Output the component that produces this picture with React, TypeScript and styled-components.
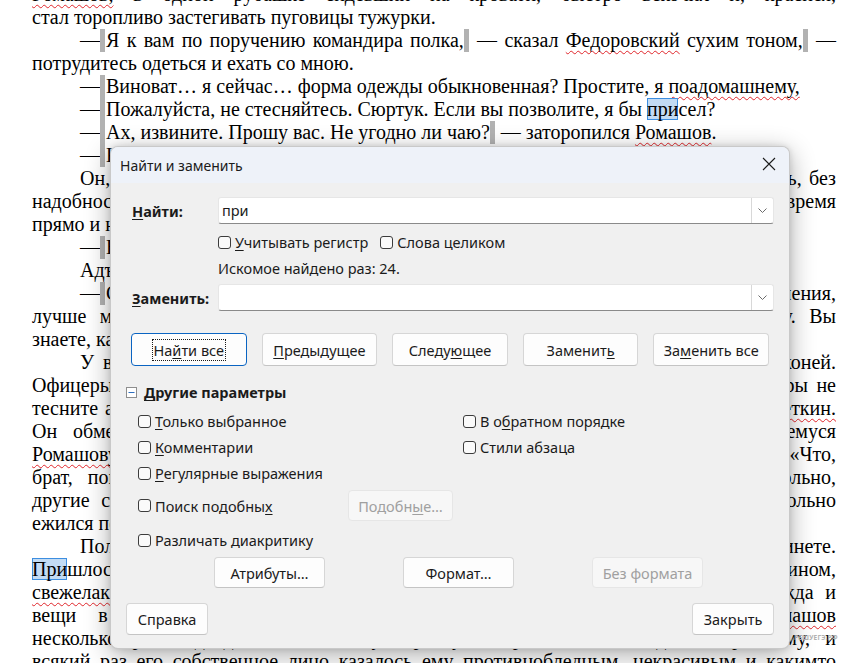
import styled, { createGlobalStyle } from "styled-components";

const GlobalStyle = createGlobalStyle`
  html,
  body {
    margin: 0;
    padding: 0;
    background: #ffffff;
    overflow: hidden;
  }
`;

export default function App() {
  return (
    <>
      <GlobalStyle />
      <Page>
        <Doc>
          <Line>
            <Spell>Ромашов,</Spell> в одной рубашке сидевший на кровати, быстро вскочил и, краснея,
          </Line>
          <Line $end>стал торопливо застегивать пуговицы тужурки.</Line>
          <Line $indent>
            —<Bar />Я к вам по поручению командира полка,<Bar /> — сказал <Spell>Федоровский</Spell> сухим тоном,<Bar /> —
          </Line>
          <Line $end>потрудитесь одеться и ехать со мною.</Line>
          <Line $indent $end>
            —<Bar />Виноват… я сейчас… форма одежды обыкновенная? Простите, я <Spell>поадомашнему,</Spell>
          </Line>
          <Line $indent $end>
            —<Bar />Пожалуйста, не стесняйтесь. Сюртук. Если вы позволите, я бы <Hit>при</Hit>сел?
          </Line>
          <Line $indent $end>
            —<Bar />Ах, извините. Прошу вас. Не угодно ли чаю?<Bar /> — заторопился <Spell>Ромашов</Spell>.
          </Line>
          <Line $indent $end>
            —<Bar />К сожалению, некогда. Благодарю вас.
          </Line>
          <Line $indent>
            Он, не снимая шинели, сел на стул и стал поправлять портупею, смахивать пыль, без
          </Line>
          <Line>
            надобности, вертел в руках перчатки. Ромашов торопливо одевался и все это время
          </Line>
          <Line $end>прямо и напряженно глядел на адъютанта.</Line>
          <Line $indent $end>
            —<Bar />Вы готовы? Так поедемте.
          </Line>
          <Line $indent $end>Адъютант молча встал и пошел к двери.</Line>
          <Line $indent>
            —<Bar />Скажите, зачем меня требуют? Это суд или меня берут только до выяснения,
          </Line>
          <Line>
            лучше молчать. Я и сам ничего не знаю, — ответил адъютант, — по приказу. Вы
          </Line>
          <Line $end>знаете, какое это тяжелое дело.</Line>
          <Line $indent>
            У ворот стояли извозчичьи дрожки, запряженные парой тощих разномастных коней.
          </Line>
          <Line>
            Офицеры сели рядом, и Федоровский вежливо подвинулся, стараясь, чтобы его шпоры не
          </Line>
          <Line>
            тесните адъютанта. Ехали молча. На углу площади им вдруг встретился поручик <Spell>Бобеткин.</Spell>
          </Line>
          <Line>
            Он обменялся с Федоровским быстрым взглядом и низко поклонился смеющемуся
          </Line>
          <Line>
            <Spell>Ромашову</Spell> и крикнул ему вслед на ходу. Ромашов разобрал только одно: «Что,
          </Line>
          <Line>
            брат, повезли тебя?» Прохожие с любопытством оглядывались, и это было больно,
          </Line>
          <Line>
            другие с любопытством смотрели им вслед из окон, и Ромашов всю дорогу невольно
          </Line>
          <Line $end>ежился под их взглядами.</Line>
          <Line $indent>
            Полковник Шульгович встретил их не в канцелярии, а у себя дома, в кабинете.
          </Line>
          <Line>
            <Hit>При</Hit>шлось долго ждать в большой холодной гостиной, пропахшей воском и керосином,
          </Line>
          <Line>
            <Spell>свежелакированной</Spell> мебелью. Все в ней было чинно и строго, как парадная одежда и
          </Line>
          <Line>
            вещи в полковом цейхгаузе перед большим инспекторским смотром. <Spell>Ромашов</Spell>
          </Line>
          <Line>
            несколько раз подходил к большому зеркалу в простенке и глядел попрежнему, и
          </Line>
          <Line>
            всякий раз его собственное лицо казалось ему противнобледным, некрасивым и какимто
          </Line>
        </Doc>
        <Watermark>РЕШУЕГЭ.РФ</Watermark>
        <FindReplaceDialog />
      </Page>
    </>
  );
}

function FindReplaceDialog() {
  return (
    <Dialog>
      <TitleBar>
        <Title>Найти и заменить</Title>
        <Close aria-label="Закрыть">
          <svg width="14" height="14" viewBox="0 0 14 14">
            <path d="M1 1L13 13M13 1L1 13" stroke="#1c1c1c" strokeWidth="1.1" />
          </svg>
        </Close>
      </TitleBar>
      <Body>
        <FieldRow>
          <FieldLabel>
            <U>Н</U>айти:
          </FieldLabel>
          <Combo>
            <ComboText>при</ComboText>
            <ComboArrow>
              <Chevron />
            </ComboArrow>
          </Combo>
        </FieldRow>
        <SubRow>
          <CheckItem>
            <Box />
            <span>
              <U>У</U>читывать регистр
            </span>
          </CheckItem>
          <CheckItem>
            <Box />
            <span>Слова целиком</span>
          </CheckItem>
        </SubRow>
        <Status>Искомое найдено раз: 24.</Status>
        <FieldRow $top={3}>
          <FieldLabel>
            <U>З</U>аменить:
          </FieldLabel>
          <Combo>
            <ComboText />
            <ComboArrow>
              <Chevron />
            </ComboArrow>
          </Combo>
        </FieldRow>
        <ActionRow>
          <Button $w={116} $focused>
            <FocusRing>
              На<U>й</U>ти все
            </FocusRing>
          </Button>
          <Button $w={116}>
            <U>П</U>редыдущее
          </Button>
          <Button $w={116}>
            Следу<U>ю</U>щее
          </Button>
          <Button $w={116}>
            Заменит<U>ь</U>
          </Button>
          <Button $w={116}>
            За<U>м</U>енить все
          </Button>
        </ActionRow>
        <SectionHeader>
          <svg width="11" height="11" viewBox="0 0 11 11">
            <rect x="0.5" y="0.5" width="10" height="10" fill="#ffffff" stroke="#8e8e8e" />
            <path d="M2.5 5.5H8.5" stroke="#2f6fbf" strokeWidth="1" />
          </svg>
          <span>
            <U>Д</U>ругие параметры
          </span>
        </SectionHeader>
        <Options>
          <OptRow>
            <CheckItem>
              <Box />
              <span>
                <U>Т</U>олько выбранное
              </span>
            </CheckItem>
            <CheckItem>
              <Box />
              <span>
                В о<U>б</U>ратном порядке
              </span>
            </CheckItem>
          </OptRow>
          <OptRow>
            <CheckItem>
              <Box />
              <span>
                <U>К</U>омментарии
              </span>
            </CheckItem>
            <CheckItem>
              <Box />
              <span>Стили абзаца</span>
            </CheckItem>
          </OptRow>
          <OptRow>
            <CheckItem>
              <Box />
              <span>
                <U>Р</U>егулярные выражения
              </span>
            </CheckItem>
          </OptRow>
          <OptRow $tall>
            <CheckItem $w={210}>
              <Box />
              <span>
                Поиск подобны<U>х</U>
              </span>
            </CheckItem>
            <Button $w={105} disabled>
              Подобн<U>ы</U>е…
            </Button>
          </OptRow>
          <OptRow>
            <CheckItem>
              <Box />
              <span>Различать диакритику</span>
            </CheckItem>
          </OptRow>
        </Options>
        <AttrRow>
          <Button $w={111}>Атрибуты…</Button>
          <Button $w={111}>Формат…</Button>
          <Button $w={111} disabled>
            Без формата
          </Button>
        </AttrRow>
        <Footer>
          <Button $w={82}>Справка</Button>
          <Button $w={82}>Закрыть</Button>
        </Footer>
      </Body>
    </Dialog>
  );
}

function Chevron() {
  return (
    <svg width="9" height="5" viewBox="0 0 9 5">
      <path d="M0.5 0.5L4.5 4.5L8.5 0.5" fill="none" stroke="#6b6b6b" strokeWidth="1" />
    </svg>
  );
}

const Page = styled.div`
  position: relative;
  width: 849px;
  height: 663px;
  overflow: hidden;
  background: #ffffff;
`;

const Doc = styled.div`
  margin-top: -17px;
  padding: 0 13px 0 32px;
  font-family: "Liberation Serif", "Times New Roman", serif;
  font-size: 20px;
  line-height: 23px;
  color: #000000;
`;

const Line = styled.p<{ $indent?: boolean; $end?: boolean }>`
  margin: 0;
  height: 23px;
  text-indent: ${(p) => (p.$indent ? "48px" : "0")};
  text-align: justify;
  text-align-last: ${(p) => (p.$end ? "left" : "justify")};
`;

const Bar = styled.span`
  display: inline-block;
  width: 5px;
  height: 23px;
  margin: 0 1px 0 0;
  vertical-align: top;
  background: #b2b2b2;
`;

const Spell = styled.span`
  text-decoration: underline wavy #e0262b;
  text-decoration-thickness: 1px;
  text-underline-offset: 3px;
  text-decoration-skip-ink: none;
`;

const Hit = styled.span`
  background: #c2dbf4;
  box-shadow: inset 0 0 0 1px #3d8ee0;
`;

const Watermark = styled.div`
  position: absolute;
  left: 794px;
  top: 633px;
  font-family: "Noto Sans", sans-serif;
  font-size: 6.5px;
  font-weight: 700;
  letter-spacing: 0.2px;
  color: #b2b2b2;
`;

const Dialog = styled.div`
  position: absolute;
  left: 110px;
  top: 146px;
  width: 680px;
  box-sizing: border-box;
  border: 1px solid rgba(0, 0, 0, 0.16);
  border-radius: 8px;
  overflow: hidden;
  background: #f0f0f0;
  box-shadow: 0 6px 26px rgba(0, 0, 0, 0.32), 0 0 6px rgba(0, 0, 0, 0.12);
  font-family: "Noto Sans", sans-serif;
  font-size: 14.5px;
  color: #1b1b1b;
`;

const TitleBar = styled.div`
  display: flex;
  align-items: center;
  justify-content: space-between;
  height: 36px;
  padding: 0 13px 0 9px;
  background: #eef2f9;
`;

const Title = styled.span`
  font-size: 14px;
`;

const Close = styled.span`
  display: flex;
  align-items: center;
  margin-top: -3px;
`;

const Body = styled.div`
  display: flex;
  flex-direction: column;
  padding: 14px 15px 13px;
`;

const FieldRow = styled.div<{ $top?: number }>`
  display: grid;
  grid-template-columns: 92px 1fr;
  align-items: center;
  height: 27px;
  margin-top: ${(p) => p.$top ?? 0}px;
`;

const FieldLabel = styled.span`
  padding-left: 6px;
  font-weight: 700;
`;

const Combo = styled.div`
  display: flex;
  height: 27px;
  box-sizing: border-box;
  background: #ffffff;
  border: 1px solid #e6e6e6;
  border-bottom-color: #8a8a8a;
  border-radius: 3px;
`;

const ComboText = styled.span`
  flex: 1;
  padding-left: 3px;
  line-height: 25px;
`;

const ComboArrow = styled.span`
  display: flex;
  align-items: center;
  justify-content: center;
  width: 21px;
  border-left: 1px solid #d8d8d8;
`;

const SubRow = styled.div`
  display: flex;
  gap: 12px;
  height: 26px;
  margin-top: 5px;
  padding-left: 92px;
`;

const Status = styled.div`
  height: 26px;
  padding-left: 92px;
  line-height: 26px;
`;

const CheckItem = styled.label<{ $w?: number }>`
  display: flex;
  align-items: center;
  gap: 4px;
  height: 26px;
  width: ${(p) => (p.$w ? `${p.$w}px` : "auto")};
  white-space: nowrap;
`;

const Box = styled.span`
  flex: none;
  width: 13px;
  height: 13px;
  box-sizing: border-box;
  border: 1px solid #3c3c3c;
  border-radius: 3px;
  background: #fafafa;
`;

const U = styled.span`
  text-decoration: underline;
  text-underline-offset: 2px;
`;

const Button = styled.button<{ $w: number; $focused?: boolean }>`
  display: flex;
  align-items: center;
  justify-content: center;
  width: ${(p) => p.$w}px;
  height: 100%;
  padding: 0;
  box-sizing: border-box;
  font: inherit;
  color: #1b1b1b;
  background: #fdfdfd;
  border: 1px solid ${(p) => (p.$focused ? "#0a64c2" : "#d6d6d6")};
  border-bottom-color: ${(p) => (p.$focused ? "#0a64c2" : "#c4c4c4")};
  border-radius: 4px;

  &:disabled {
    color: #a0a0a0;
    background: #f7f7f7;
    border-color: #e6e6e6;
  }
`;

const FocusRing = styled.span`
  padding: 0 1px;
  line-height: 20px;
  outline: 1px dotted #1b1b1b;
`;

const ActionRow = styled.div`
  display: flex;
  gap: 15px;
  height: 33px;
  margin-top: 22px;
  padding: 0 5px;
`;

const SectionHeader = styled.div`
  display: flex;
  align-items: center;
  gap: 7px;
  height: 26px;
  margin-top: 13px;
  font-weight: 700;
`;

const Options = styled.div`
  display: flex;
  flex-direction: column;
  margin-top: 3px;
  padding-left: 12px;
`;

const OptRow = styled.div<{ $tall?: boolean }>`
  display: grid;
  grid-template-columns: ${(p) => (p.$tall ? "210px 105px" : "325px 1fr")};
  align-items: center;
  height: ${(p) => (p.$tall ? 31 : 26)}px;
  margin: ${(p) => (p.$tall ? "4px 0 6px" : "0")};
`;

const AttrRow = styled.div`
  display: flex;
  gap: 78px;
  height: 31px;
  margin-top: 4px;
  padding-left: 88px;
`;

const Footer = styled.div`
  display: flex;
  justify-content: space-between;
  height: 32px;
  margin-top: 15px;
`;
